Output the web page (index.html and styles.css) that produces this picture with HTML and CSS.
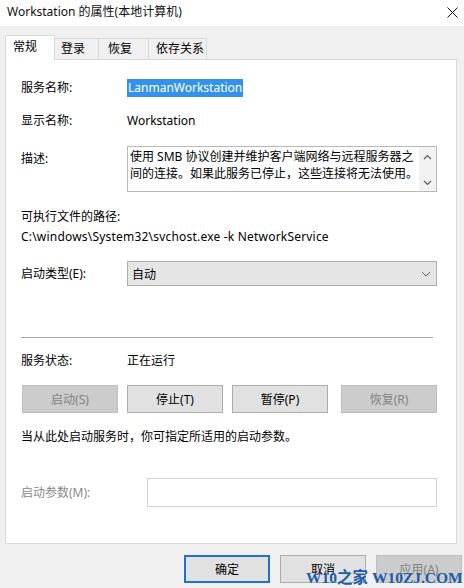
FILE: index.html
```html
<!DOCTYPE html>
<html lang="zh-CN">
<head>
    <meta charset="UTF-8">
    <title>Workstation 的属性(本地计算机)</title>
    <link rel="stylesheet" href="styles.css">
</head>
<body>
    <div class="titlebar">
        <span class="title">Workstation 的属性(本地计算机)</span>
        <svg class="close" width="11" height="11" viewBox="0 0 11 11">
            <path d="M0.5 0.5 L10.5 10.5 M10.5 0.5 L0.5 10.5" stroke="#111" stroke-width="1" fill="none"/>
        </svg>
    </div>

    <div class="dialog">
        <div class="tabs">
            <div class="tab active">常规</div>
            <div class="tab">登录</div>
            <div class="tab">恢复</div>
            <div class="tab">依存关系</div>
        </div>

        <div class="panel">
            <div class="row first">
                <span class="label">服务名称:</span>
                <span class="value"><span class="selected">LanmanWorkstation</span></span>
            </div>
            <div class="row">
                <span class="label">显示名称:</span>
                <span class="value">Workstation</span>
            </div>
            <div class="row desc-row">
                <span class="label desc-label">描述:</span>
                <div class="desc-box">
                    <div class="desc-text">使用 SMB 协议创建并维护客户端网络与远程服务器之<br>间的连接。如果此服务已停止，这些连接将无法使用。</div>
                    <div class="scrollbar">
                        <svg width="9" height="6" viewBox="0 0 9 6"><path d="M1 5 L4.5 1.5 L8 5" stroke="#606060" stroke-width="1.2" fill="none"/></svg>
                        <svg width="9" height="6" viewBox="0 0 9 6"><path d="M1 1 L4.5 4.5 L8 1" stroke="#606060" stroke-width="1.2" fill="none"/></svg>
                    </div>
                </div>
            </div>
            <div class="path-label">可执行文件的路径:</div>
            <div class="path">C:\windows\System32\svchost.exe -k NetworkService</div>
            <div class="row select-row">
                <span class="label">启动类型(E):</span>
                <div class="select">
                    <span>自动</span>
                    <svg width="10" height="6" viewBox="0 0 10 6"><path d="M1 1 L5 5 L9 1" stroke="#606060" stroke-width="1" fill="none"/></svg>
                </div>
            </div>

            <div class="separator"></div>

            <div class="row status-row">
                <span class="label">服务状态:</span>
                <span class="value">正在运行</span>
            </div>
            <div class="actions">
                <button class="btn disabled">启动(S)</button>
                <button class="btn">停止(T)</button>
                <button class="btn">暂停(P)</button>
                <button class="btn disabled">恢复(R)</button>
            </div>
            <div class="note">当从此处启动服务时，你可指定所适用的启动参数。</div>
            <div class="params">
                <span class="label gray">启动参数(M):</span>
                <div class="param-input"></div>
            </div>
        </div>

        <div class="footer">
            <button class="btn footer-btn default">确定</button>
            <button class="btn footer-btn">取消</button>
            <button class="btn footer-btn disabled">应用(A)</button>
        </div>
    </div>

    <div class="watermark">W10之家 W10ZJ.COM</div>
</body>
</html>
```

FILE: styles.css
```css
body {
    margin: 0;
    padding: 0;
    width: 464px;
    height: 588px;
    overflow: hidden;
    background-color: #f0f0f0;
    font-family: "Noto Sans", "Noto Sans CJK SC", sans-serif;
    font-size: 12px;
    color: #000;
    position: relative;
}

.titlebar {
    height: 26px;
    background-color: #ffffff;
    display: flex;
    align-items: center;
    justify-content: space-between;
    padding: 0 6px 4px 7px;
    box-sizing: border-box;
}

.title {
    font-size: 12px;
    color: #111;
}

.close {
    margin-top: 2px;
}

.dialog {
    padding: 9px 7px 0 5px;
}

/* Tabs */
.tabs {
    display: flex;
    align-items: flex-end;
    height: 24px;
    padding-left: 1px;
}

.tab {
    height: 21px;
    line-height: 20px;
    border: 1px solid #d9d9d9;
    border-bottom: none;
    border-left: none;
    box-sizing: border-box;
    padding-left: 6px;
    background-color: #f0f0f0;
}

.tab:nth-child(1) { width: 50px; }
.tab:nth-child(2) { width: 44px; }
.tab:nth-child(3) { width: 50px; padding-left: 9px; }
.tab:nth-child(4) { width: 58px; padding-left: 7px; }

.tab.active {
    height: 25px;
    line-height: 22px;
    background-color: #ffffff;
    border-left: 1px solid #d9d9d9;
    margin-bottom: -1px;
    margin-left: -1px;
    position: relative;
    z-index: 1;
    padding-left: 7px;
}

/* Panel */
.panel {
    height: 485px;
    box-sizing: border-box;
    background-color: #ffffff;
    border: 1px solid #d9d9d9;
    padding: 19px 19px 0 15px;
}

.row {
    display: flex;
    align-items: center;
    margin-top: 15px;
}

.row.first {
    margin-top: 0;
}

.label {
    width: 106px;
    flex-shrink: 0;
    line-height: 18px;
}

.label.gray {
    color: #8a8a8a;
    width: 126px;
}

.value {
    line-height: 18px;
}

.selected {
    background-color: #3393ea;
    color: #ffffff;
    display: inline-block;
    padding: 0 1px;
}

.desc-row {
    align-items: flex-start;
    margin-top: 16px;
}

.desc-label {
    padding-top: 4px;
}

.desc-box {
    flex: 1;
    height: 46px;
    box-sizing: border-box;
    border: 1px solid #b9b9b9;
    display: flex;
    overflow: hidden;
}

.desc-text {
    flex: 1;
    padding: 1px 0 0 2px;
    line-height: 17px;
    white-space: nowrap;
    overflow: hidden;
}

.scrollbar {
    width: 17px;
    flex-shrink: 0;
    background-color: #f2f2f2;
    display: flex;
    flex-direction: column;
    justify-content: space-between;
    align-items: center;
    padding: 7px 0 5px;
}

.path-label {
    margin-top: 16px;
    line-height: 18px;
}

.path {
    margin-top: 2px;
    line-height: 18px;
    letter-spacing: 0.2px;
}

.select-row {
    margin-top: 15px;
}

.select {
    flex: 1;
    height: 25px;
    box-sizing: border-box;
    border: 1px solid #adadad;
    background-color: #e5e5e5;
    display: flex;
    align-items: center;
    justify-content: space-between;
    padding: 0 5px 0 4px;
}

.separator {
    height: 1px;
    background-color: #a8a8a8;
    margin: 51px 4px 0 0;
}

.status-row {
    margin-top: 14px;
}

/* Buttons */
.btn {
    font-family: inherit;
    font-size: 12px;
    color: #000;
    background-color: #e1e1e1;
    border: 1px solid #adadad;
    height: 28px;
    width: 96px;
    padding: 0;
    margin: 0;
}

.btn.disabled {
    background-color: #cccccc;
    border-color: #bfbfbf;
    color: #838383;
}

.actions {
    display: flex;
    gap: 9px;
    margin: 15px 0 0 1px;
}

.actions .btn:last-child {
    margin-left: auto;
}

.note {
    margin-top: 15px;
    line-height: 18px;
}

.params {
    display: flex;
    align-items: center;
    margin-top: 32px;
}

.param-input {
    flex: 1;
    height: 29px;
    box-sizing: border-box;
    border: 1px solid #d4d4d4;
    background-color: #ffffff;
}

.footer {
    display: flex;
    justify-content: flex-end;
    gap: 10px;
    margin-top: 11px;
    margin-right: -5px;
}

.footer-btn {
    width: 86px;
    height: 28px;
}

.footer-btn.default {
    border: 2px solid #1f72c6;
}

.watermark {
    position: absolute;
    left: 306px;
    top: 565px;
    font-family: "Liberation Serif", "Noto Sans CJK SC", serif;
    font-weight: bold;
    font-size: 15.5px;
    color: #1d5cab;
    white-space: nowrap;
}
```
